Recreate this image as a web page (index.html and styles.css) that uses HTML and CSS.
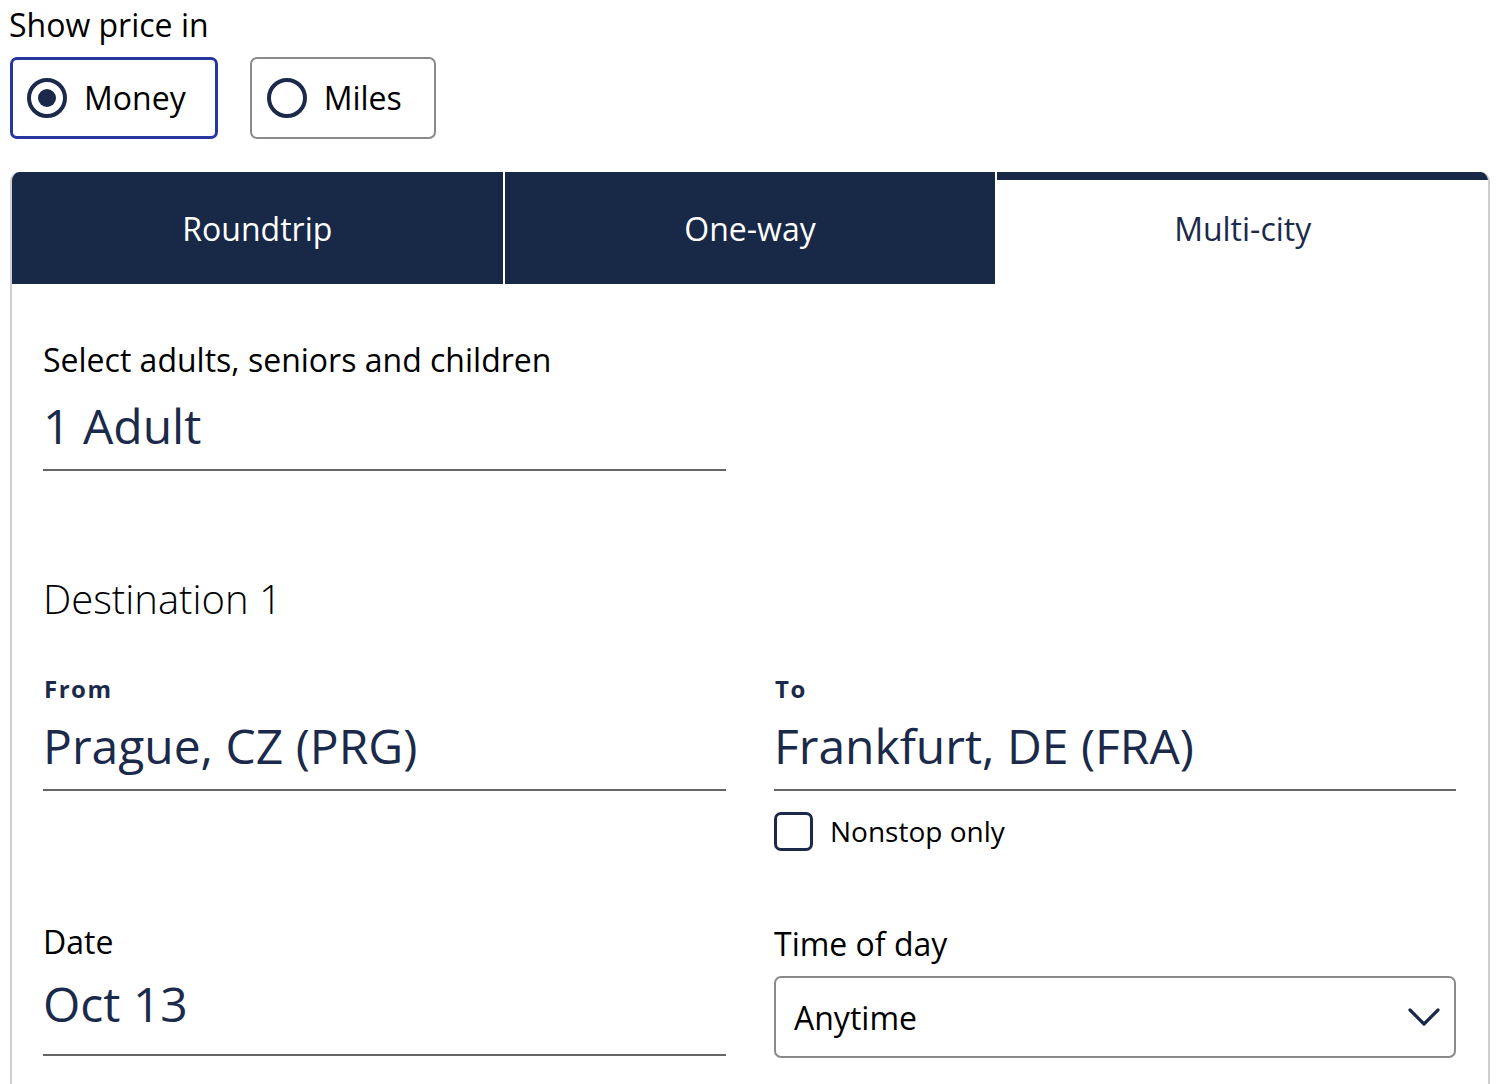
FILE: index.html
```html
<!DOCTYPE html>
<html lang="en">
<head>
<meta charset="utf-8">
<title>Flight search</title>
<link rel="stylesheet" href="styles.css">
</head>
<body>
<div class="page">
  <fieldset class="price">
    <legend class="price-legend">Show price in</legend>
    <div class="price-options">
      <label class="price-opt selected">
        <span class="radio checked"></span>
        <span class="opt-text">Money</span>
      </label>
      <label class="price-opt">
        <span class="radio"></span>
        <span class="opt-text">Miles</span>
      </label>
    </div>
  </fieldset>

  <div class="card">
    <div class="tabs">
      <div class="tab">Roundtrip</div>
      <div class="tab">One-way</div>
      <div class="tab active">Multi-city</div>
    </div>
    <div class="panel">
      <div class="field travelers">
        <div class="label">Select adults, seniors and children</div>
        <div class="value">1 Adult</div>
      </div>

      <h2 class="dest-title">Destination 1</h2>

      <div class="grid">
        <div class="field od">
          <div class="small-label">From</div>
          <div class="value">Prague, CZ (PRG)</div>
        </div>
        <div class="col">
          <div class="field od">
            <div class="small-label">To</div>
            <div class="value">Frankfurt, DE (FRA)</div>
          </div>
          <label class="check">
            <span class="box"></span>
            <span class="check-text">Nonstop only</span>
          </label>
        </div>

        <div class="field date">
          <div class="label">Date</div>
          <div class="value">Oct 13</div>
        </div>
        <div class="time">
          <div class="label">Time of day</div>
          <div class="select">
            <span class="select-text">Anytime</span>
            <svg class="chev" width="32" height="18" viewBox="0 0 32 18"><path d="M2 2 L16 16 L30 2" fill="none" stroke="#1b2a4a" stroke-width="3.2" stroke-linecap="round" stroke-linejoin="round"/></svg>
          </div>
        </div>
      </div>
    </div>
  </div>
</div>
</body>
</html>
```

FILE: styles.css
```css
* { box-sizing: border-box; }
html, body { margin: 0; padding: 0; background: #fff; }
body {
  font-family: "Open Sans", "Noto Sans", sans-serif;
  color: #000;
  overflow: hidden;
  height: 1084px;
}
.page { padding: 0 10px; width: 1500px; }

.price { border: 0; margin: 0; padding: 0; min-width: 0; }
.price-legend {
  padding: 3px 0 0 0;
  font-size: 32px;
  line-height: 44px;
  margin-left: -1px;
}
.price-options { display: flex; gap: 32px; margin-top: 10px; }
.price-opt {
  display: flex;
  align-items: center;
  height: 82px;
  padding: 0 32px 0 15px;
  border: 2px solid #8a8a8a;
  border-radius: 7px;
}
.price-opt.selected { border: 3px solid #2637a0; padding-left: 14px; padding-right: 29px; }
.radio {
  width: 40px; height: 40px;
  border: 4px solid #1b2a4a;
  border-radius: 50%;
  display: flex; align-items: center; justify-content: center;
  flex: none;
}
.radio.checked::after {
  content: "";
  width: 18px; height: 18px;
  border-radius: 50%;
  background: #1b2a4a;
}
.opt-text { font-size: 32px; margin-left: 17px; line-height: 1; }

.card {
  margin-top: 33px;
  width: 1480px;
  border: 2px solid #cfcfcf;
  border-top: 0;
  border-bottom: 0;
  border-radius: 9px 9px 0 0;
  overflow: hidden;
  height: 920px;
}
.tabs { display: flex; height: 112px; background: #fff; }
.tab {
  flex: 1;
  display: flex; align-items: center; justify-content: center;
  background: #182847;
  color: #fff;
  font-size: 32px;
}
.tab + .tab { margin-left: 2px; }
.tab.active {
  background: #fff;
  color: #1b2a4a;
  border-top: 8px solid #182847;
  padding-bottom: 8px;
}

.panel { padding: 56px 32px 0 31px; }
.label { font-size: 32px; line-height: 40px; }
.value {
  font-size: 48px;
  line-height: 64px;
  color: #1b2a4a;
}
.field { border-bottom: 2px solid #666; }
.travelers { width: 683px; padding-bottom: 11px; }
.travelers .value { margin-top: 14px; }

.dest-title {
  margin: 102px 0 0 0;
  font-size: 40px;
  font-weight: 300;
  line-height: 52px;
}

.grid {
  display: grid;
  grid-template-columns: 683px 682px;
  column-gap: 48px;
  align-items: start;
  margin-top: 49px;
}
.small-label {
  font-size: 24px;
  font-weight: 700;
  letter-spacing: 1.5px;
  color: #1b2a4a;
  line-height: 30px;
  margin-left: 1px;
}
.od { padding-bottom: 11px; }
.od .value { margin-top: 10px; }

.check { display: flex; align-items: center; margin-top: 21px; height: 39px; }
.box {
  width: 39px; height: 39px;
  border: 3px solid #1b2a4a;
  border-radius: 7px;
  flex: none;
}
.check-text { font-size: 28px; margin-left: 17px; line-height: 39px; }

.date { margin-top: 71px; padding-bottom: 18px; }
.date .value { margin-top: 10px; }
.time { margin-top: 73px; }
.select {
  margin-top: 12px;
  height: 82px;
  border: 2px solid #8a8a8a;
  border-radius: 7px;
  display: flex; align-items: center; justify-content: space-between;
  padding: 0 14px 0 18px;
}
.select-text { font-size: 32px; }
.chev { display: block; }
```
